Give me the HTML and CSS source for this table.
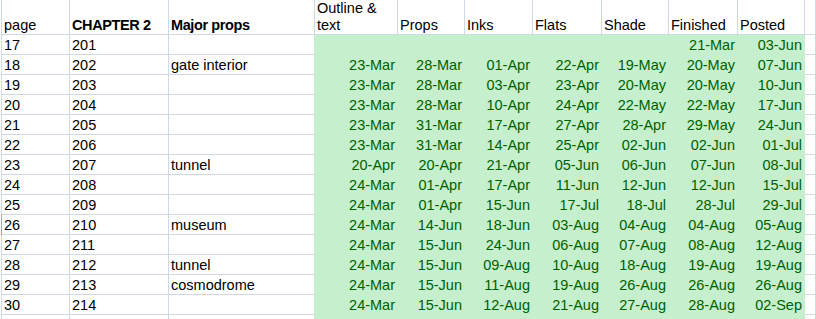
FILE: index.html
```html
<!DOCTYPE html>
<html>
<head>
<meta charset="utf-8">
<link rel="stylesheet" href="styles.css">
</head>
<body>
<div class="sheet">
  <div class="c hd">page</div><div class="c hd b">CHAPTER 2</div><div class="c hd b">Major props</div><div class="c hd wrap">Outline &amp; text</div><div class="c hd">Props</div><div class="c hd">Inks</div><div class="c hd">Flats</div><div class="c hd">Shade</div><div class="c hd">Finished</div><div class="c hd">Posted</div><div class="c hd"></div>

  <div class="c">17</div><div class="c">201</div><div class="c e"></div><div class="c g"></div><div class="c g"></div><div class="c g"></div><div class="c g"></div><div class="c g"></div><div class="c g">21-Mar</div><div class="c g">03-Jun</div><div class="c"></div>

  <div class="c">18</div><div class="c">202</div><div class="c e">gate interior</div><div class="c g">23-Mar</div><div class="c g">28-Mar</div><div class="c g">01-Apr</div><div class="c g">22-Apr</div><div class="c g">19-May</div><div class="c g">20-May</div><div class="c g">07-Jun</div><div class="c"></div>

  <div class="c">19</div><div class="c">203</div><div class="c e"></div><div class="c g">23-Mar</div><div class="c g">28-Mar</div><div class="c g">03-Apr</div><div class="c g">23-Apr</div><div class="c g">20-May</div><div class="c g">20-May</div><div class="c g">10-Jun</div><div class="c"></div>

  <div class="c">20</div><div class="c">204</div><div class="c e"></div><div class="c g">23-Mar</div><div class="c g">28-Mar</div><div class="c g">10-Apr</div><div class="c g">24-Apr</div><div class="c g">22-May</div><div class="c g">22-May</div><div class="c g">17-Jun</div><div class="c"></div>

  <div class="c">21</div><div class="c">205</div><div class="c e"></div><div class="c g">23-Mar</div><div class="c g">31-Mar</div><div class="c g">17-Apr</div><div class="c g">27-Apr</div><div class="c g">28-Apr</div><div class="c g">29-May</div><div class="c g">24-Jun</div><div class="c"></div>

  <div class="c">22</div><div class="c">206</div><div class="c e"></div><div class="c g">23-Mar</div><div class="c g">31-Mar</div><div class="c g">14-Apr</div><div class="c g">25-Apr</div><div class="c g">02-Jun</div><div class="c g">02-Jun</div><div class="c g">01-Jul</div><div class="c"></div>

  <div class="c">23</div><div class="c">207</div><div class="c e">tunnel</div><div class="c g">20-Apr</div><div class="c g">20-Apr</div><div class="c g">21-Apr</div><div class="c g">05-Jun</div><div class="c g">06-Jun</div><div class="c g">07-Jun</div><div class="c g">08-Jul</div><div class="c"></div>

  <div class="c">24</div><div class="c">208</div><div class="c e"></div><div class="c g">24-Mar</div><div class="c g">01-Apr</div><div class="c g">17-Apr</div><div class="c g">11-Jun</div><div class="c g">12-Jun</div><div class="c g">12-Jun</div><div class="c g">15-Jul</div><div class="c"></div>

  <div class="c">25</div><div class="c">209</div><div class="c e"></div><div class="c g">24-Mar</div><div class="c g">01-Apr</div><div class="c g">15-Jun</div><div class="c g">17-Jul</div><div class="c g">18-Jul</div><div class="c g">28-Jul</div><div class="c g">29-Jul</div><div class="c"></div>

  <div class="c active">26</div><div class="c">210</div><div class="c e">museum</div><div class="c g">24-Mar</div><div class="c g">14-Jun</div><div class="c g">18-Jun</div><div class="c g">03-Aug</div><div class="c g">04-Aug</div><div class="c g">04-Aug</div><div class="c g">05-Aug</div><div class="c"></div>

  <div class="c">27</div><div class="c">211</div><div class="c e"></div><div class="c g">24-Mar</div><div class="c g">15-Jun</div><div class="c g">24-Jun</div><div class="c g">06-Aug</div><div class="c g">07-Aug</div><div class="c g">08-Aug</div><div class="c g">12-Aug</div><div class="c"></div>

  <div class="c">28</div><div class="c">212</div><div class="c e">tunnel</div><div class="c g">24-Mar</div><div class="c g">15-Jun</div><div class="c g">09-Aug</div><div class="c g">10-Aug</div><div class="c g">18-Aug</div><div class="c g">19-Aug</div><div class="c g">19-Aug</div><div class="c"></div>

  <div class="c">29</div><div class="c">213</div><div class="c e">cosmodrome</div><div class="c g">24-Mar</div><div class="c g">15-Jun</div><div class="c g">11-Aug</div><div class="c g">19-Aug</div><div class="c g">26-Aug</div><div class="c g">26-Aug</div><div class="c g">26-Aug</div><div class="c"></div>

  <div class="c">30</div><div class="c">214</div><div class="c e"></div><div class="c g">24-Mar</div><div class="c g">15-Jun</div><div class="c g">12-Aug</div><div class="c g">21-Aug</div><div class="c g">27-Aug</div><div class="c g">28-Aug</div><div class="c g">02-Sep</div><div class="c"></div>

  <div class="c"></div><div class="c"></div><div class="c e"></div><div class="c g"></div><div class="c g"></div><div class="c g"></div><div class="c g"></div><div class="c g"></div><div class="c g"></div><div class="c g"></div><div class="c"></div>
</div>
</body>
</html>
```

FILE: styles.css
```css
html, body {
  margin: 0;
  padding: 0;
  background: #ffffff;
  overflow: hidden;
}

.sheet {
  margin-left: 1px;
  border-left: 1px solid #d0d7e5;
  display: grid;
  grid-template-columns: 68px 99px 146px 83px 67px 68px 69px 67px 69px 67px 1fr;
  grid-template-rows: 35px repeat(15, 20px);
  font-family: "Liberation Sans", Arial, sans-serif;
  font-size: 14.5px;
  line-height: 17px;
  color: #000000;
}

.c {
  box-sizing: border-box;
  border-right: 1px solid #d0d7e5;
  border-bottom: 1px solid #d0d7e5;
  padding: 0 2px 0 2px;
  display: flex;
  align-items: flex-end;
  white-space: nowrap;
  overflow: hidden;
}

.hd {
  padding-bottom: 0;
}

.b {
  font-weight: bold;
  letter-spacing: -0.4px;
}

.wrap {
  white-space: normal;
}

.e {
  border-right-color: #c6efce;
}

.g {
  background: #c6efce;
  border-color: #c6efce;
  color: #006100;
  justify-content: flex-end;
  padding-right: 2px;
}

.active {
  box-shadow: -1px 0 0 #f29b3a;
}
```
